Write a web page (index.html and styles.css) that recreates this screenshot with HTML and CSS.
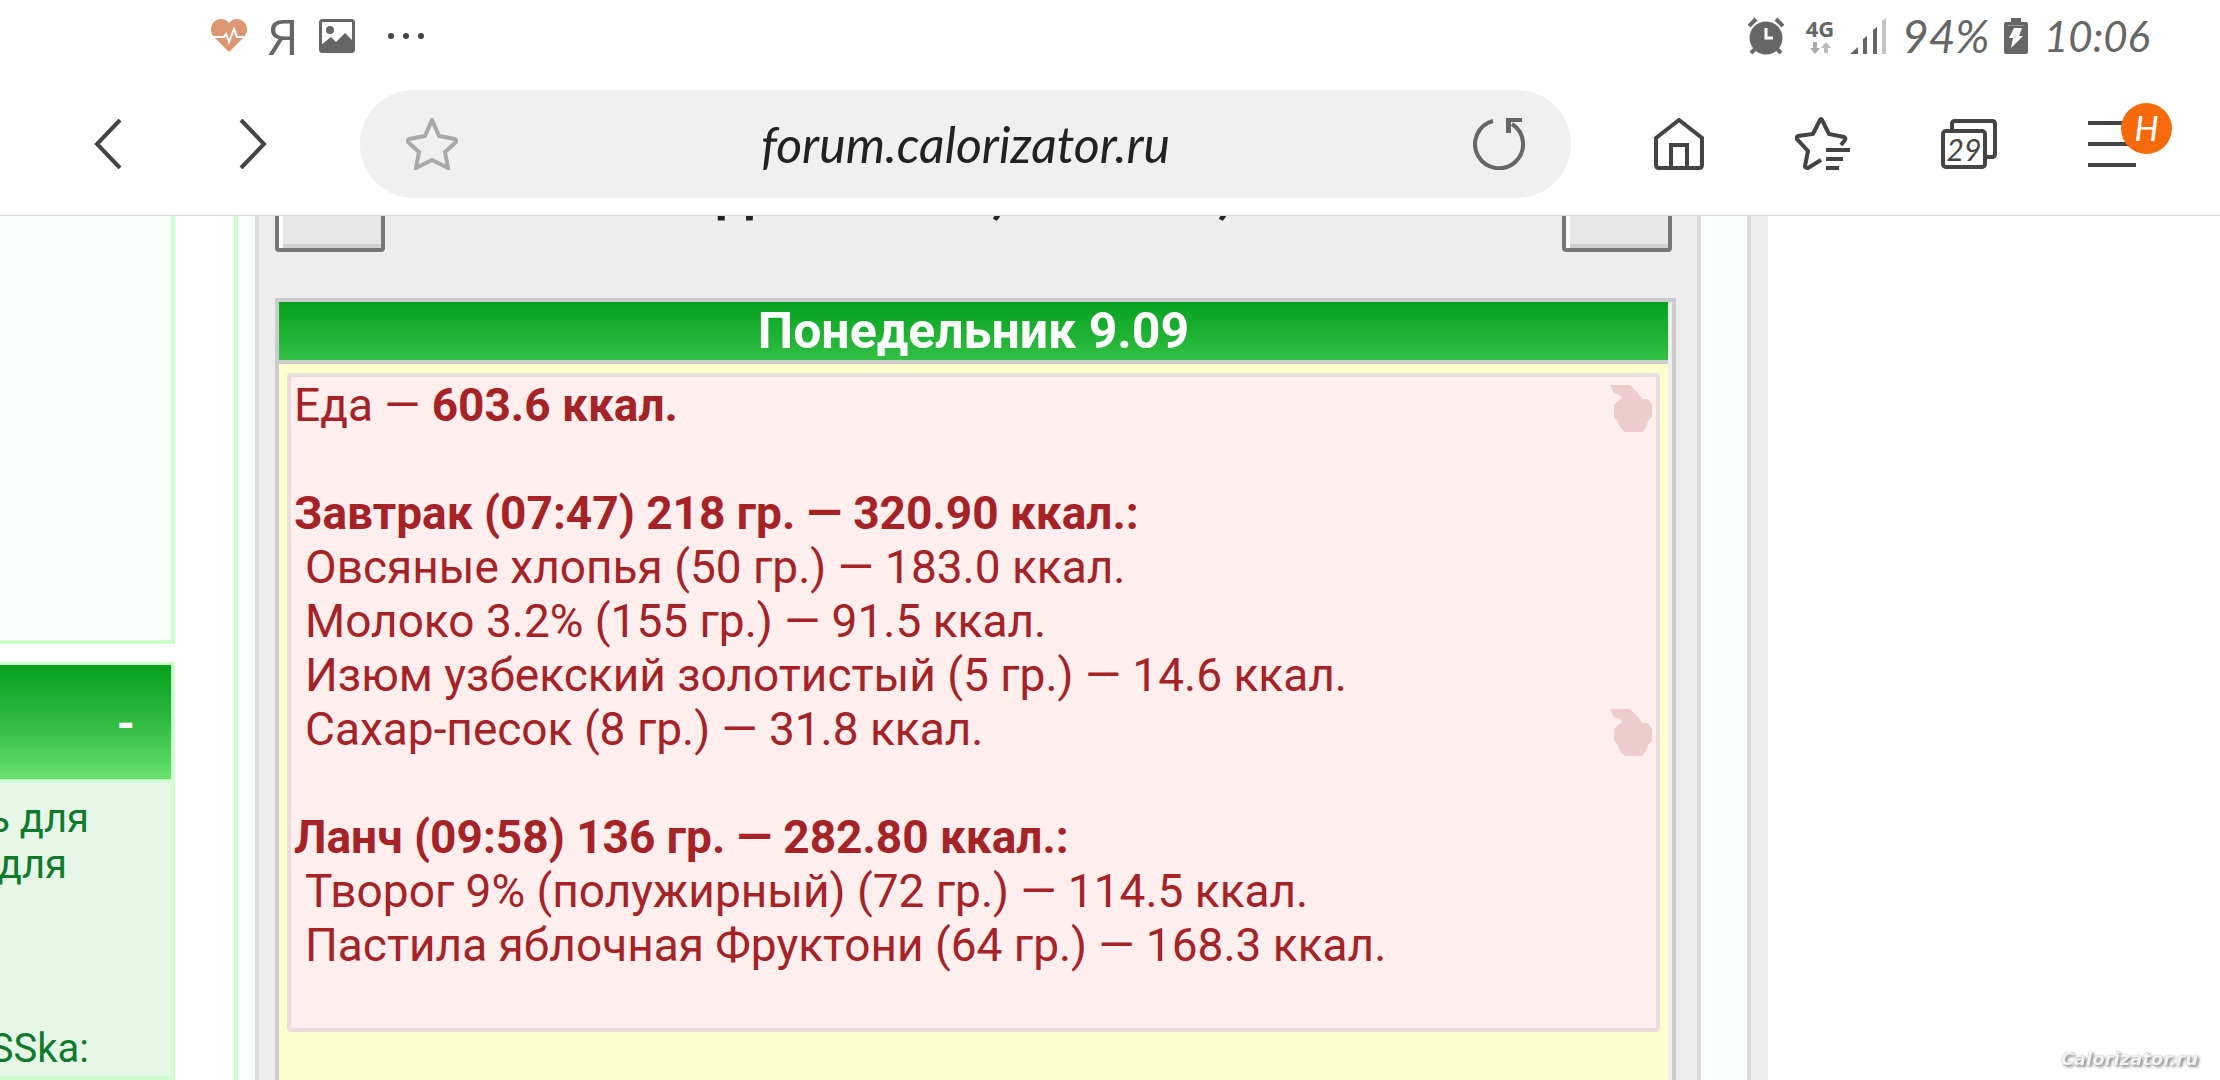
FILE: index.html
```html
<!DOCTYPE html>
<html lang="ru">
<head>
<meta charset="utf-8">
<title>forum.calorizator.ru</title>
<link rel="stylesheet" href="styles.css">
</head>
<body>
<header>
  <div class="status">
    <div class="status-group notices">
      <svg width="36" height="34" viewBox="0 0 36 34"><path fill="#dd9672" d="M18 4C14-1 7-1 3 3s-4 10 0 15l15 15 15-15c4-5 4-11 0-15s-11-4-15 1z"/><path fill="none" stroke="#fff" stroke-width="2" d="M2 18h11l2-3 3 8 5-13 3 8h8"/></svg>
      <span class="yandex">Я</span>
      <svg width="36" height="34" viewBox="0 0 36 34"><rect x="1.500" y="1.500" width="33" height="31" rx="2" fill="none" stroke="#666" stroke-width="3"/><circle cx="11" cy="11" r="4" fill="#666"/><path fill="#666" d="M2 26l10-8 5 5 9-9 8 8v10H2z"/></svg>
      <svg class="dots" width="38" height="8" viewBox="0 0 38 8" fill="#444"><circle cx="4" cy="4" r="3"/><circle cx="19" cy="4" r="3"/><circle cx="34" cy="4" r="3"/></svg>
    </div>
    <div class="status-group">
      <svg class="alarm" width="36" height="38" viewBox="0 0 36 38"><circle cx="18" cy="21" r="16.500" fill="#666"/><path stroke="#666" stroke-width="4" fill="none" d="M1 9l7-7M35 9l-7-7M3 36l5-5M33 36l-5-5"/><path stroke="#fff" stroke-width="3" fill="none" d="M18 11v10h7"/></svg>
      <div class="network"><span>4G</span><svg width="22" height="12" viewBox="0 0 22 12"><path fill="#aaa" d="M4 0h4v6h3l-5 6-5-6h3z"/><path fill="#bbb" d="M15 11h4V6h3l-5-6-5 6h3z"/></svg></div>
      <svg width="36" height="36" viewBox="0 0 36 36"><path fill="#666" d="M0 36l8-7v7zM13 36V21l4-3v18zM23 36V12l4-3v27z"/><path fill="#c4c4c4" d="M32 36V3l4-3v36z"/></svg>
      <span class="charge">94%</span>
      <svg width="24" height="36" viewBox="0 0 24 36"><path fill="#666" d="M7 0h10v4h5q2 0 2 2v28q0 2-2 2H2q-2 0-2-2V6q0-2 2-2h5z"/><path stroke="#999" d="M4 7.500h16"/><path fill="#fff" d="M10 10h8l-3 8h4L7 30l2-10H5z"/></svg>
      <time class="clock">10:06</time>
    </div>
  </div>
  <nav class="toolbar">
    <div class="history">
      <button class="icon" aria-label="Назад"><svg width="28" height="50" viewBox="0 0 28 50"><path class="ink" d="M26 1L3 25l23 24"/></svg></button>
      <button class="icon" aria-label="Вперёд"><svg width="28" height="50" viewBox="0 0 28 50"><path class="ink" d="M2 1l23 24L2 49"/></svg></button>
    </div>
    <div class="address">
      <button class="icon" aria-label="В закладки"><svg width="52" height="52" viewBox="0 0 52 52"><path class="ink pale" d="M26 2l7 16 16 3q2 1 1 3L39 34l3 16-16-8-16 8 3-16L2 24q-1-2 1-3l16-3z"/></svg></button>
      <input class="url" type="text" aria-label="Адрес" value="forum.calorizator.ru">
      <button class="icon" aria-label="Обновить"><svg width="52" height="52" viewBox="0 0 52 52"><path class="ink mid" d="M20 3A24 24 0 1 0 39 6"/><path fill="#666" d="M33 0h16v4H38v11h-5z"/></svg></button>
    </div>
    <div class="tools">
      <button class="icon" aria-label="Домой"><svg width="50" height="52" viewBox="0 0 50 52"><path class="ink" d="M2 20L25 2l23 18v27q0 3-3 3H5q-3 0-3-3zM17 50V27h16v23"/></svg></button>
      <button class="icon" aria-label="Закладки"><svg width="55" height="54" viewBox="0 0 55 54"><path class="ink" d="M26 43l-13 8q-3 0-3-2l3-15L2 22q-1-2 1-3l15-2 7-14q1-2 2 0l7 14 15 3q2 1 1 3l-4 5"/><path class="ink" d="M31 33h24M31 42h17M31 51h13"/></svg></button>
      <button class="icon tabs" aria-label="Вкладки"><svg width="56" height="50" viewBox="0 0 56 50"><rect class="ink" x="2" y="12" width="42" height="36" rx="3"/><path class="ink" d="M11 12V5q0-3 3-3h37q3 0 3 3v30q0 3-3 3h-7"/></svg><span class="count">29</span></button>
      <button class="icon menu" aria-label="Меню"><svg width="48" height="46" viewBox="0 0 48 46"><path class="ink" d="M0 2h48M0 23h48M0 44h48"/></svg><span class="badge">H</span></button>
    </div>
  </nav>
</header>
<div class="page">
  <aside class="sidebar">
    <section class="box plain"></section>
    <section class="box">
      <div class="box-head"><button class="toggle">-</button></div>
      <div class="box-body">
        <p class="l1">ь для</p><p class="l2">для</p><p></p><p></p><p></p><p class="l1">SSka:</p>
      </div>
    </section>
  </aside>
  <main class="content">
    <div class="panel">
      <div class="pager">
        <button class="step" aria-label="Предыдущая"></button>
        <h1 class="week">Дневник 37, 15.09.19,</h1>
        <button class="step" aria-label="Следующая"></button>
      </div>
      <div class="diary">
        <h2 class="day">Понедельник 9.09</h2>
        <div class="day-body">
          <div class="meals">
            <div class="row"><p>Еда — <b>603.6 ккал.</b></p><svg class="apple" width="43" height="47" viewBox="0 0 43 47"><path d="M0 0h20l4 4 4 4 4 6h6l4 6v12l-4 4-2 6-4 5H15l-5-5-2-6-4-4V20l4-4 4-3-2-3-6-2z"/></svg></div>
            <h3 class="meal">Завтрак (07:47) 218 гр. — 320.90 ккал.:</h3>
            <p class="item">Овсяные хлопья (50 гр.) — 183.0 ккал.</p>
            <p class="item">Молоко 3.2% (155 гр.) — 91.5 ккал.</p>
            <p class="item">Изюм узбекский золотистый (5 гр.) — 14.6 ккал.</p>
            <div class="row"><p class="item">Сахар-песок (8 гр.) — 31.8 ккал.</p><svg class="apple" width="43" height="47" viewBox="0 0 43 47"><path d="M0 0h20l4 4 4 4 4 6h6l4 6v12l-4 4-2 6-4 5H15l-5-5-2-6-4-4V20l4-4 4-3-2-3-6-2z"/></svg></div>
            <h3 class="meal">Ланч (09:58) 136 гр. — 282.80 ккал.:</h3>
            <p class="item">Творог 9% (полужирный) (72 гр.) — 114.5 ккал.</p>
            <p class="item">Пастила яблочная Фруктони (64 гр.) — 168.3 ккал.</p>
          </div>
        </div>
      </div>
    </div>
    <div class="gutter"></div>
    <div class="edge"></div>
  </main>
</div>
<div class="watermark">Calorizator.ru</div>
</body>
</html>
```
FILE: styles.css
```css
* { box-sizing: border-box; }
body { margin: 0; height: 100vh; overflow: hidden; display: flex; flex-direction: column; background: #fff; font-family: Roboto, sans-serif; }
p, h1, h2, h3 { margin: 0; font-weight: normal; }
button { padding: 0; border: 0; background: none; font: inherit; }
svg { display: block; flex: none; }

header { flex: none; border-bottom: 1px solid #d9d9d9; }
.status { height: 72px; display: flex; justify-content: space-between; align-items: center; padding: 0 72px 0 211px; color: #666; }
.status-group { display: flex; align-items: center; gap: 16px; }
.notices { gap: 27px; }
.yandex { width: 18px; display: flex; justify-content: center; font: 50px/60px "Liberation Sans Narrow", "Open Sans", sans-serif; }
.dots { margin-left: 5px; }
.alarm { margin-right: 6px; }
.network { width: 28px; display: flex; flex-direction: column; align-items: center; gap: 4px; font: bold 22px/20px "Open Sans", sans-serif; }
.charge, .clock { font: italic 42px/50px Lato, sans-serif; }
.charge { width: 86px; font-size: 46px; }
.clock { width: 104px; text-align: center; }

.toolbar { height: 143px; display: flex; align-items: center; padding: 0 48px 0 94px; }
.history { display: flex; gap: 117px; margin-right: 93px; }
.tools { display: flex; align-items: center; gap: 91px; margin-left: 83px; }
.ink { fill: none; stroke: #444; stroke-width: 4px; }
.pale { stroke: #a8a8a8; }
.mid { stroke: #666; }
.icon { position: relative; flex: none; color: #444; }
.address { flex: 1; min-width: 0; height: 108px; display: flex; align-items: center; padding: 0 46px; border-radius: 54px; background: #f0f0f0; }
.url { flex: 1; min-width: 0; border: 0; background: none; text-align: center; color: #222; font: italic 50px/60px Lato, sans-serif; }
.count { position: absolute; left: 0; top: 12px; width: 46px; text-align: center; font: italic 30px/36px Lato, sans-serif; }
.menu { width: 84px; }
.badge { position: absolute; right: 0; top: -18px; width: 51px; height: 51px; border-radius: 50%; background: #f66a0c; color: #fff; font: italic 34px/50px Lato, sans-serif; }

.page { flex: 1; min-height: 0; display: grid; grid-template-columns: 175px minmax(0, 1fr); gap: 59px; padding-right: 452px; overflow: hidden; }
.sidebar { overflow: hidden; display: flex; flex-direction: column; gap: 18px; }
.box { border: 4px solid #cfc; border-left: 0; }
.plain { height: 428px; border-top: 0; background: #f9fff9; }
.box:last-child { flex: 1; background: #e6f7e8; border-top-width: 3px; }
.box-head { height: 114px; display: flex; justify-content: flex-end; align-items: center; padding: 4px 36px 0 0; background: linear-gradient(#06a01e, #2fbb40 50%, #68e36e); }
.toggle { color: #fff; font-weight: bold; font-size: 46px; line-height: 54px; }
.box-body { border-top: 3px solid #cfc; padding-top: 14px; color: #107a2c; font-size: 40px; }
.box-body p { height: 46px; line-height: 46px; display: flex; justify-content: flex-end; white-space: nowrap; }
.box-body .l1 { padding-right: 82px; }
.box-body .l2 { padding-right: 104px; }

.content { display: flex; border-left: 4px solid #cfc; background: #f9fffb; padding-left: 17px; }
.panel { flex: 1; min-width: 0; display: flex; flex-direction: column; border: solid #ddd; border-width: 0 4px; background: #eee; padding: 0 21px 0 16px; }
.gutter { width: 46px; }
.edge { width: 21px; background: #eee; border-left: 4px solid #ddd; }
.pager { flex: none; height: 36px; margin: 0 4px 46px 0; display: flex; justify-content: space-between; align-items: flex-end; overflow: hidden; }
.step { flex: none; width: 110px; height: 80px; border: 4px solid #777; border-radius: 4px; background: #e7e7e7; box-shadow: inset 4px 0 #fff, inset 0 -4px #d0d0d0; }
.week { padding-bottom: 30px; color: #222; font-weight: bold; font-size: 50px; line-height: 54px; white-space: nowrap; }
.diary { flex: 1; border: 4px solid #ccc; border-bottom: 0; padding-right: 4px; display: flex; flex-direction: column; }
.day { height: 58px; background: linear-gradient(#06a01e, #32c044); color: #fff; text-align: center; font-weight: bold; font-size: 50px; line-height: 58px; }
.day-body { flex: 1; border-top: 4px solid #ccc; background: #fffecc; padding: 9px 8px; }
.meals { border: 4px solid #ebdddd; border-radius: 4px; background: #feeeee; padding: 1px 3px 56px; color: #a52226; font-size: 46px; line-height: 54px; white-space: nowrap; }
.row { display: flex; justify-content: space-between; align-items: flex-end; }
.meal { margin-top: 54px; font-size: 46px; font-weight: bold; }
.item { padding-left: 11px; }
.row .item { flex: none; }
.apple { fill: #eccccc; }
.watermark { position: fixed; right: 22px; bottom: 9px; color: #f4f4f4; font: italic bold 18px/24px "DejaVu Sans", sans-serif; text-shadow: 2px 2px 3px #888, 0 0 1px #999; }
```
